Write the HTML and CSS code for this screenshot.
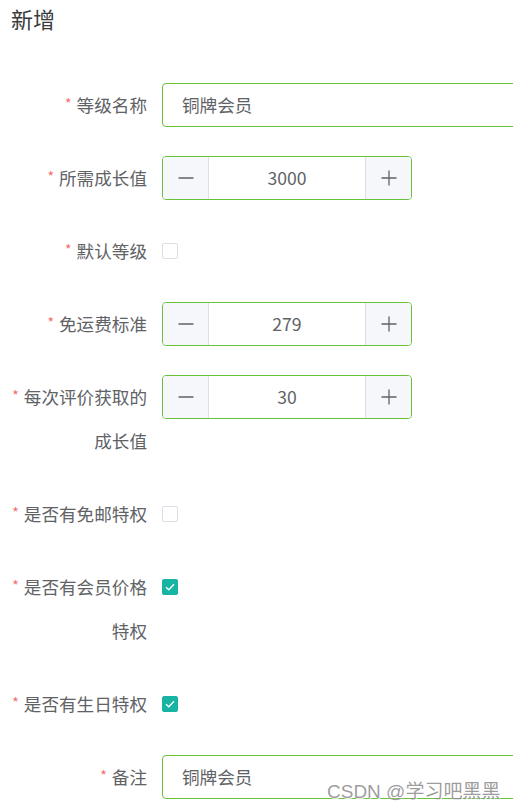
FILE: index.html
```html
<!DOCTYPE html>
<html lang="zh">
<head>
<meta charset="utf-8">
<link rel="stylesheet" href="styles.css">
</head>
<body>
<div class="page">
  <h1 class="title">新增</h1>
  <form class="form">
    <div class="item">
      <label class="label"><span class="star">*</span>等级名称</label>
      <div class="content"><div class="input">铜牌会员</div></div>
    </div>
    <div class="item">
      <label class="label"><span class="star">*</span>所需成长值</label>
      <div class="content">
        <div class="number">
          <span class="btn minus"><svg width="16" height="16" viewBox="0 0 16 16"><path d="M0.5 8H15.5" stroke="#606266" stroke-width="1.3"/></svg></span>
          <span class="value">3000</span>
          <span class="btn plus"><svg width="16" height="16" viewBox="0 0 16 16"><path d="M0.5 8H15.5M8 0.5V15.5" stroke="#606266" stroke-width="1.3"/></svg></span>
        </div>
      </div>
    </div>
    <div class="item">
      <label class="label"><span class="star">*</span>默认等级</label>
      <div class="content"><span class="checkbox"></span></div>
    </div>
    <div class="item">
      <label class="label"><span class="star">*</span>免运费标准</label>
      <div class="content">
        <div class="number">
          <span class="btn minus"><svg width="16" height="16" viewBox="0 0 16 16"><path d="M0.5 8H15.5" stroke="#606266" stroke-width="1.3"/></svg></span>
          <span class="value">279</span>
          <span class="btn plus"><svg width="16" height="16" viewBox="0 0 16 16"><path d="M0.5 8H15.5M8 0.5V15.5" stroke="#606266" stroke-width="1.3"/></svg></span>
        </div>
      </div>
    </div>
    <div class="item">
      <label class="label"><span class="star">*</span>每次评价获取的成长值</label>
      <div class="content">
        <div class="number">
          <span class="btn minus"><svg width="16" height="16" viewBox="0 0 16 16"><path d="M0.5 8H15.5" stroke="#606266" stroke-width="1.3"/></svg></span>
          <span class="value">30</span>
          <span class="btn plus"><svg width="16" height="16" viewBox="0 0 16 16"><path d="M0.5 8H15.5M8 0.5V15.5" stroke="#606266" stroke-width="1.3"/></svg></span>
        </div>
      </div>
    </div>
    <div class="item">
      <label class="label"><span class="star">*</span>是否有免邮特权</label>
      <div class="content"><span class="checkbox"></span></div>
    </div>
    <div class="item">
      <label class="label"><span class="star">*</span>是否有会员价格特权</label>
      <div class="content"><span class="checkbox checked"><svg width="10" height="8" viewBox="0 0 10 8"><path d="M1 4.2L3.8 6.8L9 1.2" fill="none" stroke="#fff" stroke-width="1.3"/></svg></span></div>
    </div>
    <div class="item">
      <label class="label"><span class="star">*</span>是否有生日特权</label>
      <div class="content"><span class="checkbox checked"><svg width="10" height="8" viewBox="0 0 10 8"><path d="M1 4.2L3.8 6.8L9 1.2" fill="none" stroke="#fff" stroke-width="1.3"/></svg></span></div>
    </div>
    <div class="item">
      <label class="label"><span class="star">*</span>备注</label>
      <div class="content"><div class="input">铜牌会员</div></div>
    </div>
  </form>
  <div class="watermark">CSDN @学习吧黑黑</div>
</div>
</body>
</html>
```
FILE: styles.css
```css
html, body {
  margin: 0;
  padding: 0;
  background: #fff;
  overflow: hidden;
}
body {
  font-family: "Noto Sans CJK SC", "Noto Sans", sans-serif;
  color: #606266;
}
.page {
  position: relative;
  width: 513px;
  height: 811px;
  overflow: hidden;
}
.title {
  margin: 0;
  padding-left: 11px;
  font-size: 22px;
  font-weight: normal;
  line-height: 36px;
  height: 36px;
  color: #3a3b3d;
}
.form {
  margin: 0;
  padding-top: 47px;
}
.item {
  display: flex;
  align-items: flex-start;
  margin-bottom: 29px;
}
.label {
  width: 147px;
  flex: none;
  text-align: right;
  font-size: 17.6px;
  line-height: 44px;
  color: #606266;
  box-sizing: border-box;
  padding-left: 10px;
}
.star {
  color: #f56c6c;
  font-size: 14px;
  line-height: 1;
  margin-right: 5px;
  vertical-align: 3px;
}
.content {
  margin-left: 15px;
  height: 44px;
  display: flex;
  align-items: center;
}
.input {
  width: 400px;
  height: 44px;
  box-sizing: border-box;
  border: 1px solid #67c23a;
  border-radius: 4px;
  padding-left: 19px;
  font-size: 17.6px;
  line-height: 42px;
  color: #606266;
}
.number {
  width: 250px;
  height: 44px;
  box-sizing: border-box;
  border: 1px solid #67c23a;
  border-radius: 4px;
  display: flex;
  overflow: hidden;
}
.btn {
  width: 45px;
  flex: none;
  background: #f5f7fa;
  display: flex;
  align-items: center;
  justify-content: center;
}
.minus {
  border-right: 1px solid #dcdfe6;
}
.plus {
  border-left: 1px solid #dcdfe6;
}
.value {
  flex: 1;
  text-align: center;
  font-size: 17.6px;
  line-height: 42px;
  color: #606266;
}
.checkbox {
  width: 16px;
  height: 16px;
  box-sizing: border-box;
  border: 1px solid #dcdfe6;
  border-radius: 2px;
  background: #fff;
  display: flex;
  align-items: center;
  justify-content: center;
}
.checkbox.checked {
  background: #17b3a3;
  border-color: #17b3a3;
}
.watermark {
  position: absolute;
  left: 327px;
  top: 778px;
  font-family: "Liberation Sans", "Noto Sans CJK SC", sans-serif;
  font-size: 19px;
  line-height: 28px;
  color: rgba(140, 140, 140, 0.85);
  text-shadow: 1px 1px 1px #fff;
  white-space: nowrap;
}
```
